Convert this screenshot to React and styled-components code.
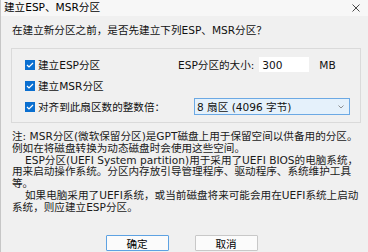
import React from 'react';
import styled, { createGlobalStyle } from 'styled-components';

const GlobalStyle = createGlobalStyle`
  html, body {
    margin: 0;
    padding: 0;
    background: #f0f0f0;
  }
  body {
    font-family: "DejaVu Sans", "Noto Sans CJK SC", sans-serif;
    font-size: 10.6px;
    color: #111;
  }
`;

const Window = styled.div`
  width: 368px;
  height: 252px;
  box-sizing: border-box;
  border-left: 1px solid #c6c6c6;
  background: #f0f0f0;
  overflow: hidden;
  display: flex;
  flex-direction: column;
`;

const TitleBar = styled.div`
  height: 16px;
  display: flex;
  align-items: center;
  justify-content: space-between;
  padding: 0 8px 0 3px;
  background: #f7f7f7;
  line-height: 1;
`;

const Title = styled.span`
  color: #000;
  margin-top: -2px;
`;

const Body = styled.div`
  padding: 0 7px 0 10px;
  display: flex;
  flex-direction: column;
`;

const Question = styled.div`
  margin-top: 8px;
  line-height: 13px;
  padding-left: 1px;
`;

const Group = styled.div`
  margin-top: 11px;
  height: 75px;
  box-sizing: border-box;
  border: 1px solid #dadada;
  padding: 5px 11px 0 13px;
  display: flex;
  flex-direction: column;
`;

const Row = styled.div`
  height: 21px;
  display: grid;
  grid-template-columns: 153px 1fr;
  align-items: center;
`;

const CheckItem = styled.label`
  display: flex;
  align-items: center;
  gap: 3px;
  white-space: nowrap;
`;

const Box = styled.span`
  width: 10px;
  height: 10px;
  background: #0a6fd0;
  display: inline-flex;
  align-items: center;
  justify-content: center;
`;

const Cluster = styled.div`
  display: flex;
  align-items: center;
  white-space: nowrap;
`;

const SizeInput = styled.div`
  margin-left: 5px;
  width: 50px;
  height: 15px;
  background: #fff;
  box-sizing: border-box;
  padding-left: 3px;
  display: flex;
  align-items: center;
`;

const Unit = styled.span`
  margin-left: 10px;
`;

const Select = styled.div`
  margin-left: 16px;
  width: 156px;
  height: 17px;
  box-sizing: border-box;
  border: 1px solid #6ca9e4;
  background: #e5f1fb;
  display: flex;
  align-items: center;
  justify-content: space-between;
  padding: 0 5px 0 2px;
`;

const Notes = styled.div`
  margin-top: 8px;
  line-height: 11.8px;
  padding-left: 1px;
  color: #1a1a1a;
`;

const Line = styled.div`
  white-space: nowrap;
  padding-left: ${p => (p.$indent ? '13px' : '0')};
`;

const Buttons = styled.div`
  margin-top: 21px;
  display: flex;
  justify-content: center;
  gap: 26px;
  padding-right: 9px;
`;

const Button = styled.button`
  width: 63px;
  height: 16px;
  box-sizing: border-box;
  padding: 0;
  font: inherit;
  color: #000;
  background: #fbfbfb;
  border: 1px solid ${p => (p.$primary ? '#5ea2e2' : '#c8c8c8')};
  border-radius: 1px;
`;

const Check = () => (
  <Box>
    <svg width="8" height="6" viewBox="0 0 8 6">
      <path d="M1 3 L3 5 L7 1" stroke="#fff" strokeWidth="1.2" fill="none" />
    </svg>
  </Box>
);

export default function App() {
  return (
    <>
      <GlobalStyle />
      <Window>
        <TitleBar>
          <Title>建立ESP、MSR分区</Title>
          <svg width="8" height="8" viewBox="0 0 8 8">
            <path d="M0.5 0.5 L7.5 7.5 M7.5 0.5 L0.5 7.5" stroke="#333" strokeWidth="0.9" />
          </svg>
        </TitleBar>
        <Body>
          <Question>在建立新分区之前，是否先建立下列ESP、MSR分区？</Question>
          <Group>
            <Row>
              <CheckItem><Check />建立ESP分区</CheckItem>
              <Cluster>
                ESP分区的大小:
                <SizeInput>300</SizeInput>
                <Unit>MB</Unit>
              </Cluster>
            </Row>
            <Row>
              <CheckItem><Check />建立MSR分区</CheckItem>
            </Row>
            <Row>
              <CheckItem><Check />对齐到此扇区数的整数倍：</CheckItem>
              <Select>
                <span>8 扇区 (4096 字节)</span>
                <svg width="6" height="4" viewBox="0 0 6 4">
                  <path d="M0.5 0.5 L3 3 L5.5 0.5" stroke="#777" strokeWidth="0.8" fill="none" />
                </svg>
              </Select>
            </Row>
          </Group>
          <Notes>
            <Line>注: MSR分区(微软保留分区)是GPT磁盘上用于保留空间以供备用的分区。</Line>
            <Line>例如在将磁盘转换为动态磁盘时会使用这些空间。</Line>
            <Line $indent>ESP分区(UEFI System partition)用于采用了UEFI BIOS的电脑系统，</Line>
            <Line>用来启动操作系统。分区内存放引导管理程序、驱动程序、系统维护工具</Line>
            <Line>等。</Line>
            <Line $indent>如果电脑采用了UEFI系统，或当前磁盘将来可能会用在UEFI系统上启动</Line>
            <Line>系统，则应建立ESP分区。</Line>
          </Notes>
          <Buttons>
            <Button $primary>确定</Button>
            <Button>取消</Button>
          </Buttons>
        </Body>
      </Window>
    </>
  );
}
